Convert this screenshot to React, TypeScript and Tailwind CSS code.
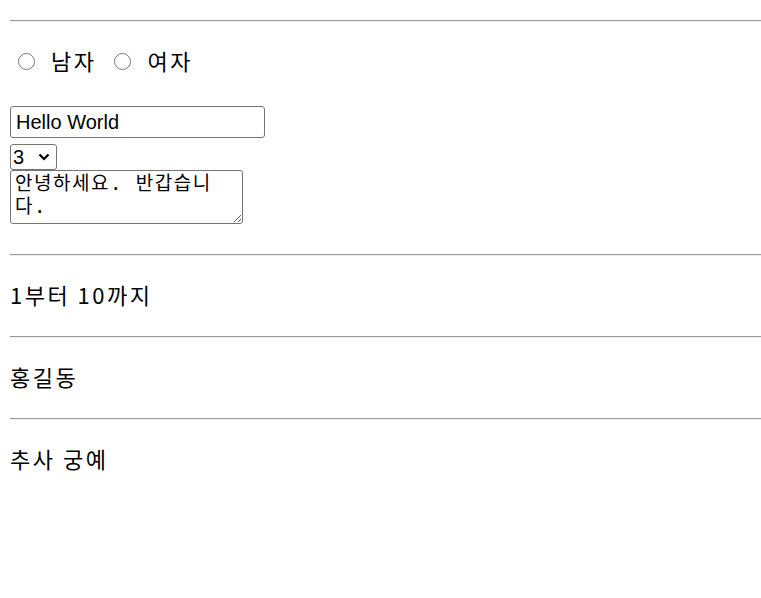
import React from 'react';

const Rule: React.FC = () => (
  <div className="h-[2px] border-t border-t-[#9a9a9a] border-b border-b-[#eeeeee]" />
);

const App: React.FC = () => {
  return (
    <div className="min-h-[598px] bg-white pl-[10px] pt-[20px] text-[22px] tracking-[2.5px] text-black font-['Malgun_Gothic','Noto_Sans_CJK_KR','Liberation_Sans',sans-serif]">
      <Rule />
      <div className="flex h-[80px] items-center pb-[3px]">
        <label className="flex items-center">
          <input
            type="radio"
            name="gender"
            className="ml-[8px] mr-[16px] h-[17px] w-[17px] shrink-0 appearance-none rounded-full border-[1.5px] border-[#7a7a7a] bg-white translate-y-[1px]"
          />
          <span>남자</span>
        </label>
        <label className="flex items-center">
          <input
            type="radio"
            name="gender"
            className="ml-[18px] mr-[16px] h-[17px] w-[17px] shrink-0 appearance-none rounded-full border-[1.5px] border-[#7a7a7a] bg-white translate-y-[1px]"
          />
          <span>여자</span>
        </label>
      </div>
      <div className="flex flex-col items-start pt-[4px] pb-[30px] tracking-normal">
        <input
          type="text"
          defaultValue="Hello World"
          className="h-[32px] w-[255px] rounded-[3px] border border-[#767676] px-[5px] text-[20px] font-['Liberation_Sans',Arial,sans-serif] text-black"
        />
        <select
          defaultValue="3"
          className="mt-[6px] h-[26px] w-[47px] appearance-none rounded-[3px] border border-[#767676] bg-white pl-[2px] text-[20px] leading-none font-['Liberation_Sans',Arial,sans-serif]"
          style={{
            backgroundImage:
              "url(\"data:image/svg+xml,%3Csvg xmlns='http://www.w3.org/2000/svg' width='14' height='10' viewBox='0 0 14 10'%3E%3Cpath d='M2.5 2.5l4.5 4.5 4.5-4.5' fill='none' stroke='black' stroke-width='2.2'/%3E%3C/svg%3E\")",
            backgroundRepeat: 'no-repeat',
            backgroundPosition: 'right 5px center',
          }}
        >
          {[1, 2, 3, 4, 5, 6, 7, 8, 9, 10].map((n) => (
            <option key={n} value={n}>
              {n}
            </option>
          ))}
        </select>
        <textarea
          defaultValue="안녕하세요. 반갑습니다."
          className="h-[54px] w-[233px] resize rounded-[3px] border border-[#767676] px-[4px] py-[1px] text-[19px] leading-[23px] tracking-[1.5px] font-['DejaVu_Sans_Mono','Noto_Sans_CJK_KR',monospace] text-black"
        />
      </div>
      <Rule />
      <div className="flex h-[80px] items-center pb-[3px]">1부터 10까지</div>
      <Rule />
      <div className="flex h-[80px] items-center pb-[3px]">홍길동</div>
      <Rule />
      <div className="flex h-[80px] items-center pb-[3px]">추사 궁예</div>
    </div>
  );
};

export default App;
